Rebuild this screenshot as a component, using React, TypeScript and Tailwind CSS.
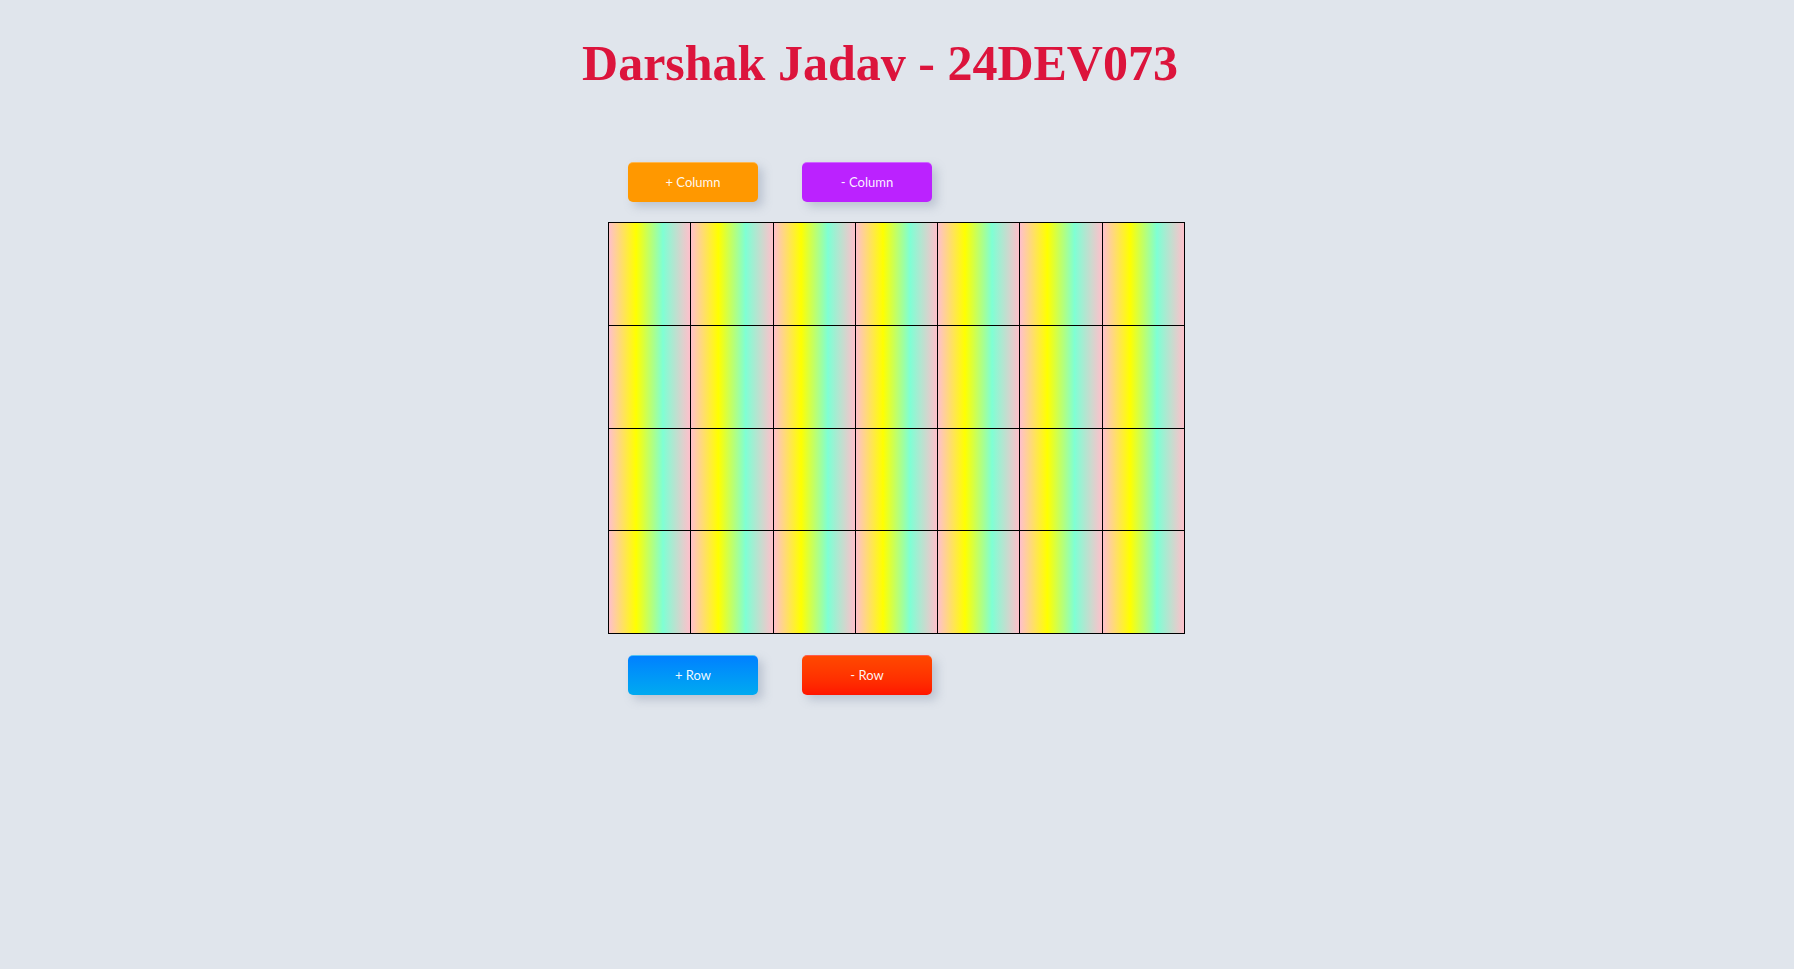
import { useState } from "react";

const cellBg =
  "bg-[linear-gradient(to_right,#ffc0cb,#ffff00,#7fffd4,#ffc0cb)]";

export default function App() {
  const [cols, setCols] = useState(7);
  const [rows, setRows] = useState(4);

  const btn =
    "w-[130px] h-[40px] rounded-[5px] text-white/95 text-[13px] shadow-[5px_5px_10px_rgba(120,135,160,0.35)] border-t border-white/30";

  return (
    <div
      className="min-h-[969px] bg-[#e0e5ec] flex flex-col items-center"
      style={{ fontFamily: "Lato, 'Liberation Sans', sans-serif" }}
    >
      {/* Title */}
      <h1
        className="pt-[38px] pr-[34px] text-[50px] leading-none font-bold text-[#dc143c]"
        style={{ fontFamily: "'Liberation Serif', serif" }}
      >
        Darshak Jadav - 24DEV073
      </h1>

      <div className="mt-[74px] w-[577px] mr-px flex flex-col">
        {/* Column controls */}
        <div className="flex gap-[44px] pl-[20px]">
          <button
            onClick={() => setCols(cols + 1)}
            className={`${btn} bg-[#ff9800]`}
          >
            + Column
          </button>
          <button
            onClick={() => cols > 1 && setCols(cols - 1)}
            className={`${btn} bg-[#bb22ff]`}
          >
            - Column
          </button>
        </div>

        {/* Grid */}
        <div
          className="mt-[20px] grid gap-px bg-black border border-black"
          style={{ gridTemplateColumns: `repeat(${cols}, minmax(0, 1fr))` }}
        >
          {Array.from({ length: rows * cols }).map((_, i) => (
            <div key={i} className={`h-[101.75px] ${cellBg}`} />
          ))}
        </div>

        {/* Row controls */}
        <div className="mt-[21px] flex gap-[44px] pl-[20px]">
          <button
            onClick={() => setRows(rows + 1)}
            className={`${btn} bg-gradient-to-b from-[#0080ff] to-[#00aaf0]`}
          >
            + Row
          </button>
          <button
            onClick={() => rows > 1 && setRows(rows - 1)}
            className={`${btn} bg-gradient-to-b from-[#ff4800] to-[#ff1400]`}
          >
            - Row
          </button>
        </div>
      </div>
    </div>
  );
}
